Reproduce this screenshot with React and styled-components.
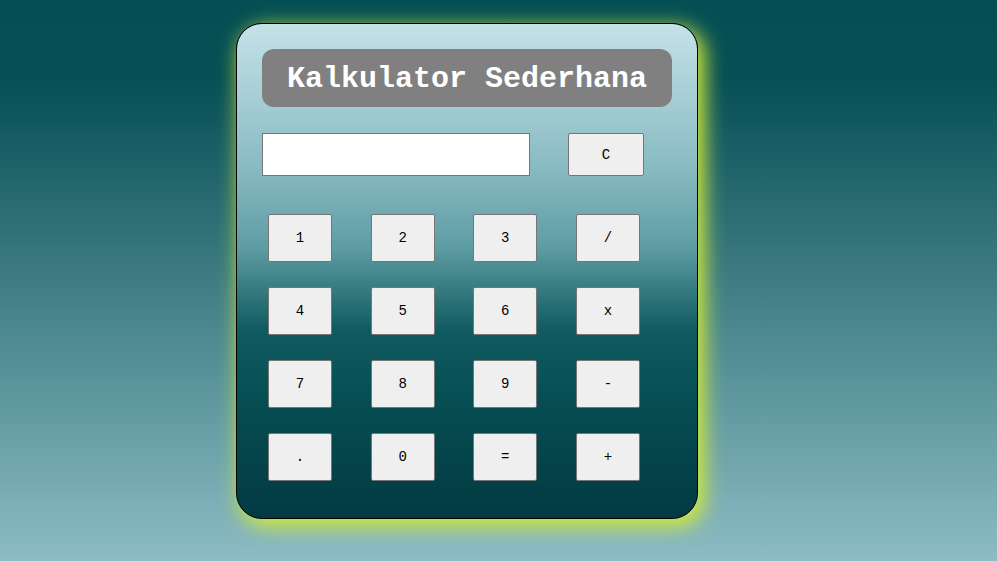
import React from "react";
import styled, { createGlobalStyle } from "styled-components";

const GlobalStyle = createGlobalStyle`
  html, body { margin: 0; padding: 0; }
  body {
    min-height: 561px;
    background: linear-gradient(180deg, #054f54 0%, #064f55 14%, #8cbcc4 100%);
    font-family: "Liberation Mono", "Courier New", monospace;
  }
`;

const Page = styled.div`
  min-height: 561px;
  box-sizing: border-box;
  padding: 23px 0 0 236px;
  display: flex;
  align-items: flex-start;
`;

const Card = styled.div`
  width: 462px;
  height: 496px;
  box-sizing: border-box;
  border: 1px solid #000;
  border-radius: 26px;
  padding: 25px 25px 0 25px;
  background: linear-gradient(
    180deg,
    #c4e2e8 0%,
    #8bbcc4 28%,
    #5e9da4 45%,
    #105b60 62%,
    #064e53 76%,
    #033a42 100%
  );
  box-shadow: 5px 6px 20px 2px #d0ea3a;
  display: flex;
  flex-direction: column;
`;

const Title = styled.h1`
  margin: 0;
  height: 58px;
  border-radius: 12px;
  background: #808080;
  color: #fff;
  font-family: "Liberation Mono", "Courier New", monospace;
  font-weight: bold;
  font-size: 30px;
  display: flex;
  align-items: center;
  justify-content: center;
  padding-top: 2px;
  box-sizing: border-box;
`;

const TopRow = styled.div`
  margin-top: 26px;
  display: flex;
  gap: 38px;
`;

const Display = styled.input`
  width: 268px;
  height: 43px;
  box-sizing: border-box;
  border: 1px solid #767676;
  background: #fff;
  margin: 0;
  padding: 0 6px;
  font-family: "Liberation Mono", "Courier New", monospace;
  font-size: 16px;
`;

const Key = styled.button`
  width: ${(p) => (p.$wide ? "76px" : "64px")};
  height: ${(p) => (p.$wide ? "43px" : "48px")};
  box-sizing: border-box;
  margin: 0;
  padding: 0;
  background: #efefef;
  border: 1px solid #767676;
  border-radius: 2px;
  color: #000;
  font-family: "Liberation Mono", "Courier New", monospace;
  font-size: 14px;
  cursor: pointer;
`;

const Keys = styled.div`
  margin-top: 38px;
  padding-left: 6px;
  display: grid;
  grid-template-columns: repeat(4, 64px);
  column-gap: 38.67px;
  row-gap: 25px;
`;

const keys = ["1", "2", "3", "/", "4", "5", "6", "x", "7", "8", "9", "-", ".", "0", "=", "+"];

export default function App() {
  return (
    <>
      <GlobalStyle />
      <Page>
        <Card>
          <Title>Kalkulator Sederhana</Title>
          <TopRow>
            <Display type="text" readOnly />
            <Key $wide>C</Key>
          </TopRow>
          <Keys>
            {keys.map((k) => (
              <Key key={k}>{k}</Key>
            ))}
          </Keys>
        </Card>
      </Page>
    </>
  );
}
